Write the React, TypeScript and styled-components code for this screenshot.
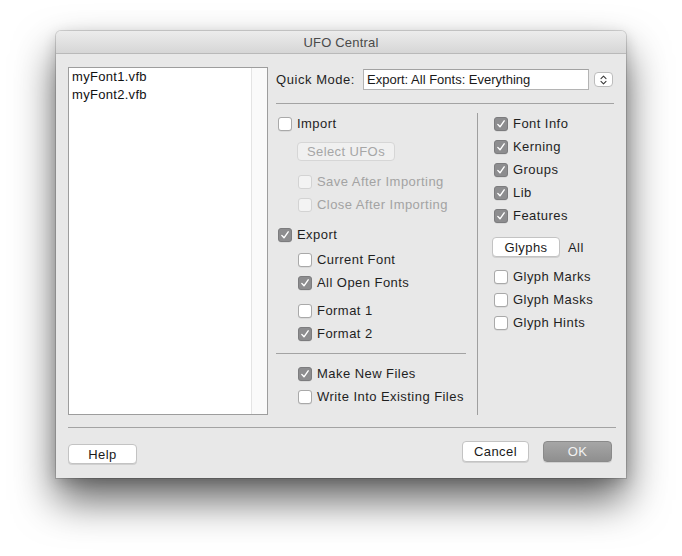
import React from 'react'
import styled, { createGlobalStyle } from 'styled-components'

const GlobalStyle = createGlobalStyle`
  html, body {
    margin: 0;
    padding: 0;
    background: #ffffff;
  }
  body {
    font-family: "Liberation Sans", Arial, sans-serif;
    font-size: 13px;
    color: #1f1f1f;
  }
`

const Page = styled.div`
  width: 682px;
  height: 556px;
  padding: 31px 0 0 56px;
  box-sizing: border-box;
`

const Window = styled.div`
  width: 570px;
  background: #e8e8e8;
  border-radius: 5px 5px 0 0;
  box-shadow: 0 0 0 1px rgba(0, 0, 0, 0.14), 0 22px 42px rgba(0, 0, 0, 0.62),
    0 4px 14px rgba(0, 0, 0, 0.16);
  overflow: hidden;
`

const TitleBar = styled.div`
  height: 22px;
  line-height: 24px;
  text-align: center;
  color: #4a4a4a;
  letter-spacing: 0.2px;
  background: linear-gradient(#ececec, #d6d6d6);
  border-bottom: 1px solid #b9b9b9;
`

const Body = styled.div`
  padding: 13px 10px 14px 12px;
`

const MainRow = styled.div`
  display: flex;
  gap: 8px;
  width: 546px;
  height: 348px;
`

const FileList = styled.div`
  width: 200px;
  height: 348px;
  box-sizing: border-box;
  background: #ffffff;
  border: 1px solid #9d9d9d;
  display: flex;
`

const ListItems = styled.div`
  flex: 1;
  padding: 0 3px;
  line-height: 18px;
  letter-spacing: 0.3px;
  color: #111;
`

const ScrollGutter = styled.div`
  width: 15px;
  background: #fafafa;
  border-left: 1px solid #e4e4e4;
`

const Panel = styled.div`
  width: 338px;
  display: flex;
  flex-direction: column;
`

const QuickRow = styled.div`
  display: flex;
  align-items: center;
  height: 23px;
  margin-top: 1px;
  margin-bottom: 12px;
`

const Label = styled.span`
  letter-spacing: 0.55px;
  width: 87px;
`

const ModeField = styled.div`
  width: 226px;
  height: 21px;
  box-sizing: border-box;
  background: #ffffff;
  border: 1px solid #b4b4b4;
  border-top-color: #a2a2a2;
  padding: 0 3px;
  line-height: 20px;
  color: #1a1a1a;
`

const Stepper = styled.div`
  width: 19px;
  height: 15px;
  margin-left: 5px;
  box-sizing: border-box;
  background: #ffffff;
  border: 1px solid #bcbcbc;
  border-radius: 4px;
  display: flex;
  align-items: center;
  justify-content: center;
`

const HLine = styled.div<{ $gapTop?: number; $gapBottom?: number }>`
  height: 1px;
  background: #a3a3a3;
  margin: ${(p) => p.$gapTop || 0}px 0 ${(p) => p.$gapBottom || 0}px 0;
`

const Columns = styled.div`
  flex: 1;
  display: flex;
`

const LeftCol = styled.div`
  width: 190px;
  padding-top: 8px;
  display: flex;
  flex-direction: column;
`

const VDivider = styled.div`
  width: 1px;
  background: #9f9f9f;
  margin: 9px 0 0 11px;
`

const RightCol = styled.div`
  flex: 1;
  padding: 8px 0 0 14px;
  display: flex;
  flex-direction: column;
`

const Row = styled.div<{ $indent?: boolean; $gapTop?: number }>`
  display: flex;
  align-items: center;
  height: 23px;
  padding-left: ${(p) => (p.$indent ? 22 : 2)}px;
  margin-top: ${(p) => p.$gapTop || 0}px;
  gap: 5px;
`

const Box = styled.span<{ $checked?: boolean; $disabled?: boolean }>`
  width: 14px;
  height: 14px;
  box-sizing: border-box;
  border-radius: 3px;
  display: inline-flex;
  align-items: center;
  justify-content: center;
  flex-shrink: 0;
  background: ${(p) =>
    p.$checked ? '#8d8d8f' : p.$disabled ? '#f3f3f3' : '#ffffff'};
  border: 1px solid
    ${(p) => (p.$checked ? '#7c7c7e' : p.$disabled ? '#d3d3d3' : '#a9a9a9')};
  box-shadow: ${(p) =>
    p.$disabled ? 'none' : '0 0.5px 0.5px rgba(0,0,0,0.12)'};
`

const RowText = styled.span<{ $disabled?: boolean }>`
  letter-spacing: 0.45px;
  color: ${(p) => (p.$disabled ? '#a3a3a3' : '#1f1f1f')};
`

const PushButton = styled.div<{
  $width: number
  $height?: number
  $variant?: 'normal' | 'disabled' | 'default'
}>`
  width: ${(p) => p.$width}px;
  height: ${(p) => p.$height || 21}px;
  box-sizing: border-box;
  border-radius: 4px;
  display: flex;
  align-items: center;
  justify-content: center;
  letter-spacing: 0.4px;
  color: ${(p) =>
    p.$variant === 'disabled'
      ? '#a6a6a6'
      : p.$variant === 'default'
      ? '#f2f2f2'
      : '#1a1a1a'};
  background: ${(p) =>
    p.$variant === 'disabled'
      ? '#f0f0f0'
      : p.$variant === 'default'
      ? 'linear-gradient(#a6a6a6, #8f8f8f)'
      : '#ffffff'};
  border: 1px solid
    ${(p) =>
      p.$variant === 'disabled'
        ? '#d6d6d6'
        : p.$variant === 'default'
        ? '#8a8a8a'
        : '#c3c3c3'};
  box-shadow: ${(p) =>
    p.$variant === 'disabled' ? 'none' : '0 1px 0.5px rgba(0,0,0,0.1)'};
`

const ButtonIndent = styled.div`
  padding-left: 21px;
  margin-top: 7px;
  margin-bottom: 9px;
`

const GlyphsRow = styled.div`
  display: flex;
  align-items: center;
  gap: 8px;
  margin: 10px 0 8px 0;
`

const Footer = styled.div`
  margin-top: 12px;
  border-top: 1px solid #a3a3a3;
  padding: 13px 4px 0 0;
  display: flex;
  align-items: flex-start;
  gap: 14px;
`

const HelpSlot = styled.div`
  margin-top: 3px;
  margin-right: auto;
`

const Check: React.FC = () => (
  <svg width="10" height="10" viewBox="0 0 10 10">
    <path
      d="M1.8 5.4 L4 7.8 L8.2 1.8"
      fill="none"
      stroke="#ffffff"
      strokeWidth="1.4"
      strokeLinecap="round"
      strokeLinejoin="round"
    />
  </svg>
)

interface CheckRowProps {
  label: string
  checked?: boolean
  disabled?: boolean
  indent?: boolean
  gapTop?: number
}

const CheckRow: React.FC<CheckRowProps> = ({
  label,
  checked,
  disabled,
  indent,
  gapTop,
}) => (
  <Row $indent={indent} $gapTop={gapTop}>
    <Box $checked={checked} $disabled={disabled}>
      {checked && <Check />}
    </Box>
    <RowText $disabled={disabled}>{label}</RowText>
  </Row>
)

const App: React.FC = () => {
  return (
    <Page>
      <GlobalStyle />
      <Window>
        <TitleBar>UFO Central</TitleBar>
        <Body>
          <MainRow>
            <FileList>
              <ListItems>
                <div>myFont1.vfb</div>
                <div>myFont2.vfb</div>
              </ListItems>
              <ScrollGutter />
            </FileList>
            <Panel>
              <QuickRow>
                <Label>Quick Mode:</Label>
                <ModeField>Export: All Fonts: Everything</ModeField>
                <Stepper>
                  <svg width="7" height="10" viewBox="0 0 7 10">
                    <path
                      d="M1 3.6 L3.5 1.2 L6 3.6 M1 6.4 L3.5 8.8 L6 6.4"
                      fill="none"
                      stroke="#3a3a3a"
                      strokeWidth="1.1"
                      strokeLinecap="round"
                      strokeLinejoin="round"
                    />
                  </svg>
                </Stepper>
              </QuickRow>
              <HLine />
              <Columns>
                <LeftCol>
                  <CheckRow label="Import" />
                  <ButtonIndent>
                    <PushButton $width={98} $height={19} $variant="disabled">
                      Select UFOs
                    </PushButton>
                  </ButtonIndent>
                  <CheckRow label="Save After Importing" indent disabled />
                  <CheckRow label="Close After Importing" indent disabled />
                  <CheckRow label="Export" checked gapTop={7} />
                  <CheckRow label="Current Font" indent gapTop={2} />
                  <CheckRow label="All Open Fonts" indent checked />
                  <CheckRow label="Format 1" indent gapTop={5} />
                  <CheckRow label="Format 2" indent checked />
                  <HLine $gapTop={8} $gapBottom={8} />
                  <CheckRow label="Make New Files" indent checked />
                  <CheckRow label="Write Into Existing Files" indent />
                </LeftCol>
                <VDivider />
                <RightCol>
                  <CheckRow label="Font Info" checked />
                  <CheckRow label="Kerning" checked />
                  <CheckRow label="Groups" checked />
                  <CheckRow label="Lib" checked />
                  <CheckRow label="Features" checked />
                  <GlyphsRow>
                    <PushButton $width={68} $height={20}>
                      Glyphs
                    </PushButton>
                    <RowText>All</RowText>
                  </GlyphsRow>
                  <CheckRow label="Glyph Marks" />
                  <CheckRow label="Glyph Masks" />
                  <CheckRow label="Glyph Hints" />
                </RightCol>
              </Columns>
            </Panel>
          </MainRow>
          <Footer>
            <HelpSlot>
              <PushButton $width={69} $height={20}>
                Help
              </PushButton>
            </HelpSlot>
            <PushButton $width={67}>Cancel</PushButton>
            <PushButton $width={69} $variant="default">
              OK
            </PushButton>
          </Footer>
        </Body>
      </Window>
    </Page>
  )
}

export default App
